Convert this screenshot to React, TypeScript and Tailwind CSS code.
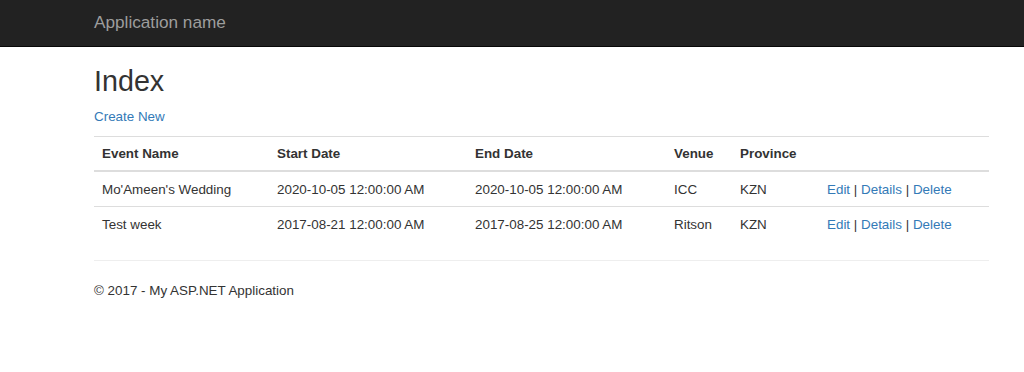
const events = [
  {
    name: "Mo'Ameen's Wedding",
    start: "2020-10-05 12:00:00 AM",
    end: "2020-10-05 12:00:00 AM",
    venue: "ICC",
    province: "KZN",
  },
  {
    name: "Test week",
    start: "2017-08-21 12:00:00 AM",
    end: "2017-08-25 12:00:00 AM",
    venue: "Ritson",
    province: "KZN",
  },
];

function RowLinks() {
  return (
    <>
      <a href="#" className="text-[#337ab7]">Edit</a> |{" "}
      <a href="#" className="text-[#337ab7]">Details</a> |{" "}
      <a href="#" className="text-[#337ab7]">Delete</a>
    </>
  );
}

export default function App() {
  return (
    <div className="min-h-[372px] w-[1024px] bg-white font-['Liberation_Sans',Arial,sans-serif] text-[13.4px] leading-5 text-[#333]">
      {/* Barre de navigation */}
      <nav className="flex h-[47px] items-center border-b border-[#080808] bg-[#222] pl-[94px]">
        <a href="#" className="pb-[2px] text-[17.2px] text-[#9d9d9d]">
          Application name
        </a>
      </nav>

      <div className="w-[989px] pl-[94px]">
        <h2 className="mt-[18px] text-[28.7px] leading-[33px] font-normal">Index</h2>
        <p className="mt-[9px]">
          <a href="#" className="text-[#337ab7]">Create New</a>
        </p>

        <table className="mt-[9px] w-full border-collapse border-t border-[#ddd] text-left">
          <thead>
            <tr className="border-b-2 border-[#ddd]">
              <th className="w-[175px] px-2 pt-[7px] pb-[6px] font-bold">Event Name</th>
              <th className="w-[198px] px-2 pt-[7px] pb-[6px] font-bold">Start Date</th>
              <th className="w-[199px] px-2 pt-[7px] pb-[6px] font-bold">End Date</th>
              <th className="w-[66px] px-2 pt-[7px] pb-[6px] font-bold">Venue</th>
              <th className="w-[87px] px-2 pt-[7px] pb-[6px] font-bold">Province</th>
              <th className="px-2 pt-[7px] pb-[6px]"></th>
            </tr>
          </thead>
          <tbody>
            {events.map((ev, i) => (
              <tr key={i} className={i > 0 ? "border-t border-[#ddd]" : ""}>
                <td className="px-2 pt-[8px] pb-[6px]">{ev.name}</td>
                <td className="px-2 pt-[8px] pb-[6px]">{ev.start}</td>
                <td className="px-2 pt-[8px] pb-[6px]">{ev.end}</td>
                <td className="px-2 pt-[8px] pb-[6px]">{ev.venue}</td>
                <td className="px-2 pt-[8px] pb-[6px]">{ev.province}</td>
                <td className="px-2 pt-[8px] pb-[6px]">
                  <RowLinks />
                </td>
              </tr>
            ))}
          </tbody>
        </table>

        <hr className="mt-[19px] border-t border-[#eee]" />
        <footer className="mt-[20px]">
          <p>© 2017 - My ASP.NET Application</p>
        </footer>
      </div>
    </div>
  );
}
